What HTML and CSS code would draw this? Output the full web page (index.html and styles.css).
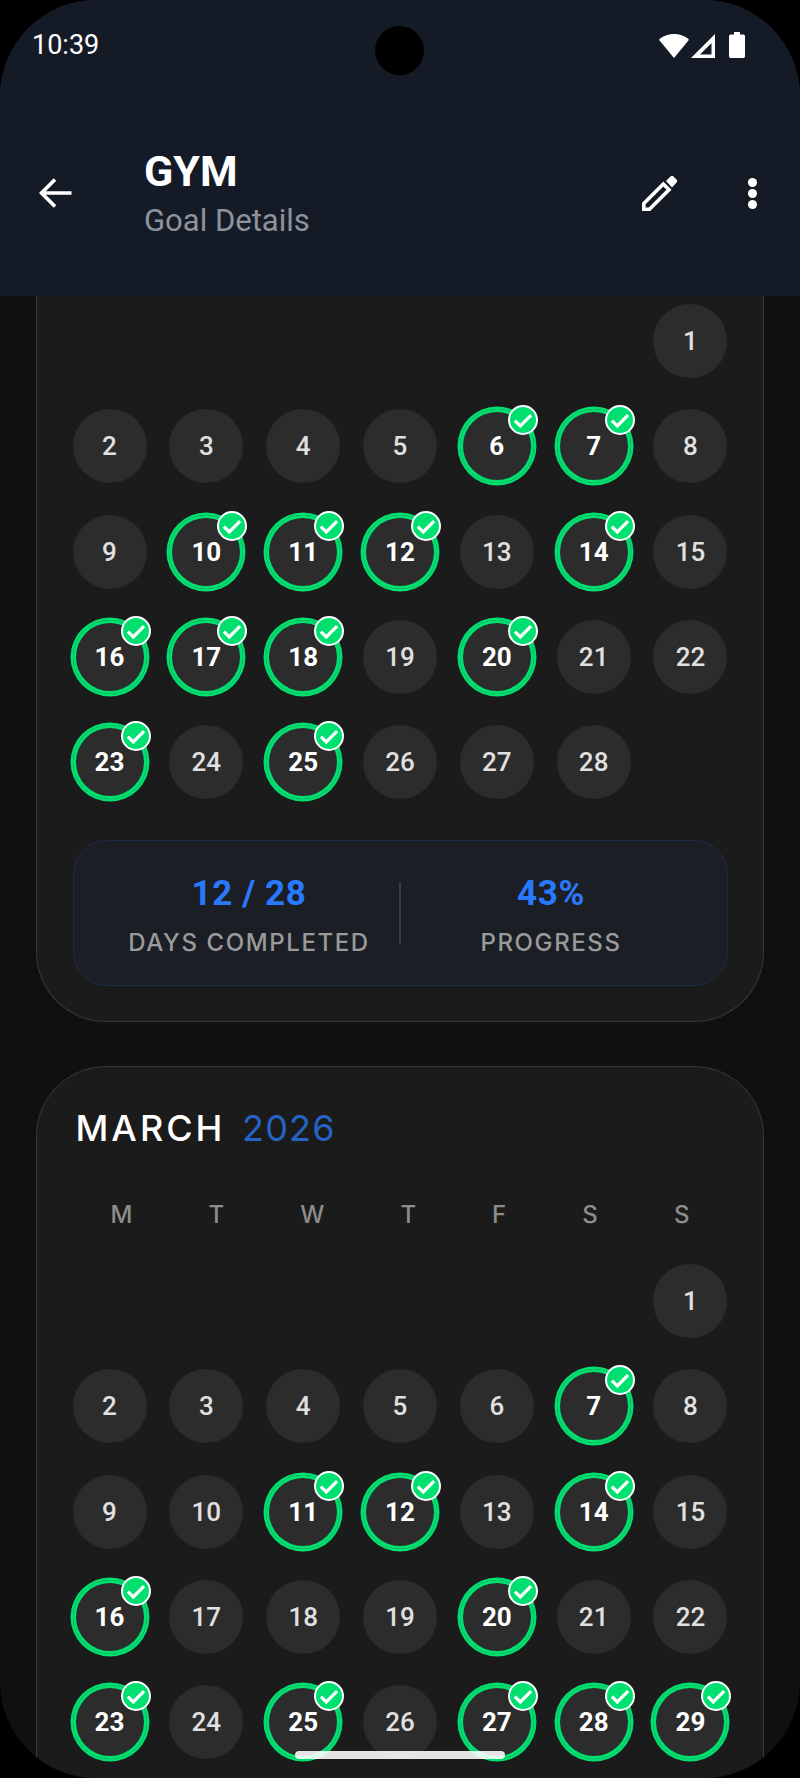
FILE: index.html
```html
<!DOCTYPE html>
<html lang="en">
<head>
    <meta charset="UTF-8">
    <meta name="viewport" content="width=device-width, initial-scale=1.0">
    <title>GYM - Goal Details</title>
    <link rel="stylesheet" href="styles.css">
</head>
<body>
    <svg class="defs" width="0" height="0">
        <symbol id="tick" viewBox="0 0 24 24">
            <path d="M4.500 12.500l5 5L19.500 7.500" fill="none" stroke="#fff" stroke-width="3"/>
        </symbol>
    </svg>

    <div class="screen">
        <header class="topbar">
            <div class="status">
                <span class="clock">10:39</span>
                <div class="status-icons">
                    <svg class="wifi" viewBox="0 0 30 24"><path d="M15 24L.6 6.600C.2 6 .2 5.300 .8 4.800 4.700 1.700 9.600 0 15 0s10.300 1.700 14.200 4.800c.6 .5 .6 1.200 .2 1.800z" fill="#fff"/></svg>
                    <svg class="signal" viewBox="0 0 24 24"><path d="M24 0v24H0zM20.500 9L9 20.500h11.500z" fill="#fff" fill-rule="evenodd"/></svg>
                    <svg class="battery" viewBox="0 0 16 26"><path d="M5 0h6v2.500h3.200c1 0 1.800 .8 1.800 1.800v19.900c0 1-.8 1.800-1.800 1.800H1.800C.8 26 0 25.200 0 24.200V4.300c0-1 .8-1.800 1.800-1.800H5z" fill="#fff"/></svg>
                </div>
            </div>
            <div class="camera"></div>
            <div class="appbar">
                <svg class="back" viewBox="0 0 33 30"><path d="M32.500 15H3M16 1.500L2.500 15 16 28.500" fill="none" stroke="#fff" stroke-width="3.600"/></svg>
                <div class="titles">
                    <h1>GYM</h1>
                    <p>Goal Details</p>
                </div>
                <svg class="pencil" viewBox="0 0 36 36"><path d="M1.800 28.500v5.700h5.700L27 14.700 21.300 9z" fill="none" stroke="#fff" stroke-width="3.600"/><path d="M24 6L28.500 1.500c.9-.9 2.100-.9 3 0l3 3c.9 .9 .9 2.100 0 3L30 12.500z" fill="#fff"/></svg>
                <div class="dots"><i></i><i></i><i></i></div>
            </div>
        </header>

        <main class="content">
            <section class="card card-cut">
                <div class="days">
                    <div class="blank"></div><div class="blank"></div><div class="blank"></div><div class="blank"></div><div class="blank"></div><div class="blank"></div>
                    <div class="day">1</div>
                    <div class="day">2</div>
                    <div class="day">3</div>
                    <div class="day">4</div>
                    <div class="day">5</div>
                    <div class="day done">6<span class="badge"><svg><use href="#tick"/></svg></span></div>
                    <div class="day done">7<span class="badge"><svg><use href="#tick"/></svg></span></div>
                    <div class="day">8</div>
                    <div class="day">9</div>
                    <div class="day done">10<span class="badge"><svg><use href="#tick"/></svg></span></div>
                    <div class="day done">11<span class="badge"><svg><use href="#tick"/></svg></span></div>
                    <div class="day done">12<span class="badge"><svg><use href="#tick"/></svg></span></div>
                    <div class="day">13</div>
                    <div class="day done">14<span class="badge"><svg><use href="#tick"/></svg></span></div>
                    <div class="day">15</div>
                    <div class="day done">16<span class="badge"><svg><use href="#tick"/></svg></span></div>
                    <div class="day done">17<span class="badge"><svg><use href="#tick"/></svg></span></div>
                    <div class="day done">18<span class="badge"><svg><use href="#tick"/></svg></span></div>
                    <div class="day">19</div>
                    <div class="day done">20<span class="badge"><svg><use href="#tick"/></svg></span></div>
                    <div class="day">21</div>
                    <div class="day">22</div>
                    <div class="day done">23<span class="badge"><svg><use href="#tick"/></svg></span></div>
                    <div class="day">24</div>
                    <div class="day done">25<span class="badge"><svg><use href="#tick"/></svg></span></div>
                    <div class="day">26</div>
                    <div class="day">27</div>
                    <div class="day">28</div>
                </div>
                <div class="stats">
                    <div class="stat">
                        <div class="stat-value">12 / 28</div>
                        <div class="stat-label">DAYS COMPLETED</div>
                    </div>
                    <div class="stat-line"></div>
                    <div class="stat">
                        <div class="stat-value">43%</div>
                        <div class="stat-label">PROGRESS</div>
                    </div>
                </div>
            </section>

            <section class="card card-long">
                <h2 class="month">MARCH <span>2026</span></h2>
                <div class="weekdays">
                    <span>M</span><span>T</span><span>W</span><span>T</span><span>F</span><span>S</span><span>S</span>
                </div>
                <div class="days">
                    <div class="blank"></div><div class="blank"></div><div class="blank"></div><div class="blank"></div><div class="blank"></div><div class="blank"></div>
                    <div class="day">1</div>
                    <div class="day">2</div>
                    <div class="day">3</div>
                    <div class="day">4</div>
                    <div class="day">5</div>
                    <div class="day">6</div>
                    <div class="day done">7<span class="badge"><svg><use href="#tick"/></svg></span></div>
                    <div class="day">8</div>
                    <div class="day">9</div>
                    <div class="day">10</div>
                    <div class="day done">11<span class="badge"><svg><use href="#tick"/></svg></span></div>
                    <div class="day done">12<span class="badge"><svg><use href="#tick"/></svg></span></div>
                    <div class="day">13</div>
                    <div class="day done">14<span class="badge"><svg><use href="#tick"/></svg></span></div>
                    <div class="day">15</div>
                    <div class="day done">16<span class="badge"><svg><use href="#tick"/></svg></span></div>
                    <div class="day">17</div>
                    <div class="day">18</div>
                    <div class="day">19</div>
                    <div class="day done">20<span class="badge"><svg><use href="#tick"/></svg></span></div>
                    <div class="day">21</div>
                    <div class="day">22</div>
                    <div class="day done">23<span class="badge"><svg><use href="#tick"/></svg></span></div>
                    <div class="day">24</div>
                    <div class="day done">25<span class="badge"><svg><use href="#tick"/></svg></span></div>
                    <div class="day">26</div>
                    <div class="day done">27<span class="badge"><svg><use href="#tick"/></svg></span></div>
                    <div class="day done">28<span class="badge"><svg><use href="#tick"/></svg></span></div>
                    <div class="day done">29<span class="badge"><svg><use href="#tick"/></svg></span></div>
                </div>
            </section>
        </main>

        <div class="home-bar"></div>
    </div>
</body>
</html>
```

FILE: styles.css
```css
* {
    box-sizing: border-box;
}

html, body {
    margin: 0;
    height: 100%;
    background: #000;
}

.defs {
    position: absolute;
}

.screen {
    position: relative;
    width: 800px;
    height: 1778px;
    display: flex;
    flex-direction: column;
    overflow: hidden;
    border-radius: 96px;
    background: #101010;
    font-family: Roboto, "Liberation Sans", sans-serif;
}

/* header */
.topbar {
    position: relative;
    flex: none;
    height: 296px;
    background: #151b26;
    color: #fff;
}

.status {
    display: flex;
    justify-content: space-between;
    align-items: center;
    height: 26px;
    padding: 32px 55px 0 32px;
    box-sizing: content-box;
}

.clock {
    font-size: 27px;
    line-height: 25px;
}

.status-icons {
    display: flex;
    align-items: flex-end;
    gap: 2px;
}

.wifi {
    width: 30px;
    height: 24px;
}

.signal {
    width: 24px;
    height: 24px;
}

.battery {
    width: 16px;
    height: 26px;
    margin-left: 12px;
}

.camera {
    position: absolute;
    top: 26px;
    left: 375px;
    width: 49px;
    height: 49px;
    border-radius: 50%;
    background: #000;
}

.appbar {
    display: flex;
    align-items: center;
    height: 100px;
    margin-top: 85px;
    padding: 0 43px 0 39px;
}

.back {
    width: 33px;
    height: 30px;
    margin-right: 72px;
}

.titles {
    flex: 1;
}

.titles h1 {
    margin: -1px 0 0;
    font-size: 43px;
    line-height: 50px;
    font-weight: 700;
}

.titles p {
    margin: 7px 0 0;
    font-size: 31px;
    line-height: 36px;
    color: #8e939b;
}

.pencil {
    width: 36px;
    height: 36px;
    margin-right: 70px;
}

.dots {
    display: flex;
    flex-direction: column;
    gap: 2px;
}

.dots i {
    width: 9px;
    height: 9px;
    border-radius: 50%;
    background: #fff;
}

/* scrolled content */
.content {
    flex: 1;
    min-height: 0;
    overflow: hidden;
    padding: 0 36px;
}

.card {
    padding: 38px 35.500px 36px;
    margin-bottom: 44px;
    border: 1.500px solid #38383b;
    border-radius: 70px;
    background: #1b1b1b;
}

.card-cut {
    padding: 8px 35.500px 35px;
    border-top: 0;
    border-radius: 0 0 70px 70px;
}

/* runs on below the fold */
.card-long {
    padding-bottom: 140px;
}

.month {
    margin: 0 0 0 3px;
    font-family: Inter, "Liberation Sans", sans-serif;
    font-size: 36px;
    line-height: 46px;
    font-weight: 500;
    letter-spacing: 3px;
    color: #fff;
}

.month span {
    margin-left: 4px;
    font-weight: 400;
    letter-spacing: 1.200px;
    color: #2563c4;
}

.weekdays {
    display: flex;
    justify-content: space-around;
    margin: 49px 0 35px;
    font-family: Inter, "Liberation Sans", sans-serif;
    font-size: 24px;
    line-height: 29px;
    font-weight: 500;
    color: #8c8c8c;
}

.days {
    display: grid;
    grid-template-columns: repeat(7, 74px);
    justify-content: space-between;
    row-gap: 31.300px;
}

.day {
    position: relative;
    display: flex;
    align-items: center;
    justify-content: center;
    width: 74px;
    height: 74px;
    border-radius: 50%;
    background: #2c2c2c;
    color: #e0e0e0;
    font-size: 26px;
    font-weight: 500;
}

.done {
    color: #fff;
    font-weight: 700;
    box-shadow: 0 0 0 2.500px #00e070, inset 0 0 0 3px #00e070;
}

.badge {
    position: absolute;
    top: -4px;
    right: -4px;
    display: flex;
    width: 30px;
    height: 30px;
    border: 2.500px solid #fff;
    border-radius: 50%;
    background: #00e070;
}

.badge svg {
    width: 100%;
    height: 100%;
}

.stats {
    display: flex;
    justify-content: center;
    align-items: center;
    height: 146px;
    margin-top: 41px;
    border: 1px solid #1b2c46;
    border-radius: 34px;
    background: #1b1f25;
}

.stat {
    width: 300px;
    padding-top: 4px;
    text-align: center;
}

.stat-value {
    font-size: 35px;
    line-height: 41px;
    font-weight: 700;
    letter-spacing: 0.600px;
    color: #2979ff;
}

.stat-label {
    margin-top: 14px;
    font-family: Inter, "Liberation Sans", sans-serif;
    font-size: 24px;
    line-height: 29px;
    font-weight: 500;
    letter-spacing: 1.600px;
    color: #9a9a9a;
}

.stat-line {
    flex: none;
    width: 2px;
    height: 62px;
    background: #3a3d42;
}

.home-bar {
    position: absolute;
    left: 295px;
    bottom: 19px;
    width: 210px;
    height: 8px;
    border-radius: 4px;
    background: rgba(255, 255, 255, 0.88);
}
```
